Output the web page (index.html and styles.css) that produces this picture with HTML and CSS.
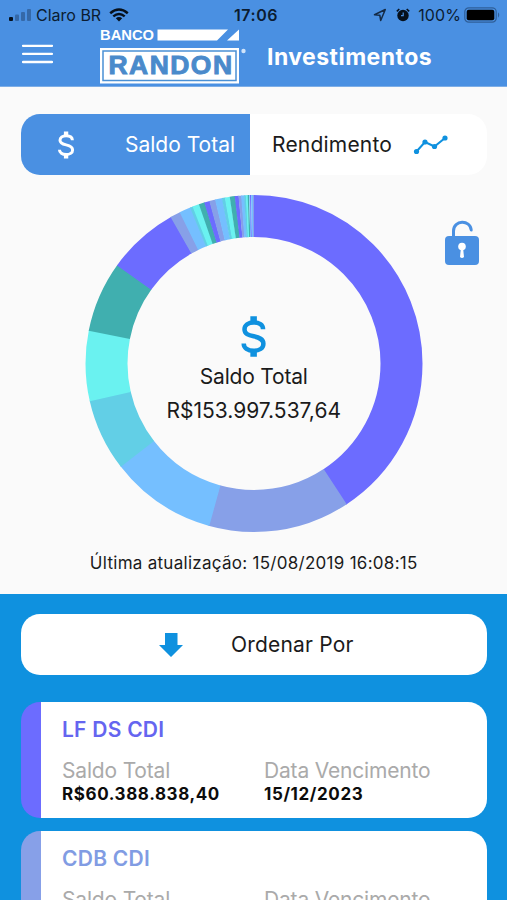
FILE: index.html
```html
<!DOCTYPE html>
<html lang="pt-BR">
<head>
<meta charset="utf-8">
<title>Investimentos</title>
<link rel="stylesheet" href="styles.css">
</head>
<body>
<header class="header">
  <div class="status">
    <div class="status-left">
      <svg width="24" height="14" viewBox="0 0 24 14"><rect x="1" y="9" width="4" height="4" rx="1" fill="#06101c"/><g fill="#3569a8"><rect x="7" y="6.500" width="4" height="6.500" rx="1"/><rect x="13" y="4" width="4" height="9" rx="1"/><rect x="19" y="1" width="4" height="12" rx="1"/></g></svg>
      <span class="carrier">Claro BR</span>
      <svg width="20" height="14" viewBox="0 0 20 14"><g fill="none" stroke="#06101c" stroke-width="2.500"><path d="M1.200 5.200Q10-2.200 18.800 5.200"/><path d="M4.300 8.400Q10 3.600 15.700 8.400"/></g><path d="M6.800 10.300Q10 7.800 13.200 10.300L10 13.500Z" fill="#06101c"/></svg>
    </div>
    <span class="clock">17:06</span>
    <div class="status-right">
      <svg width="14" height="14" viewBox="0 0 14 14"><path d="M1.500 6.700L12.300 1.500 7.700 12.500 6.800 7.200Z" fill="none" stroke="#142a45" stroke-width="1.500" stroke-linejoin="round"/></svg>
      <svg class="alarm" width="14" height="14" viewBox="0 0 14 14"><circle cx="7" cy="7.500" r="5.700" fill="#06101c"/><path d="M.8 3.300L3.300 1M13.200 3.300L10.700 1" stroke="#06101c" stroke-width="1.600"/><path d="M7.200 4.500V7.600H5" fill="none" stroke="#4a90e2" stroke-width="1.200"/></svg>
      <span class="percent">100%</span>
      <svg width="37" height="16" viewBox="0 0 37 16"><rect x=".8" y=".8" width="31.400" height="14.400" rx="4" fill="none" stroke="#2f5f99" stroke-width="1.200"/><rect x="2.700" y="2.700" width="27.600" height="10.600" rx="2" fill="#000"/><path d="M34 5.300Q36.500 8 34 10.700Z" fill="#2f5f99"/></svg>
    </div>
  </div>
  <div class="titlebar">
    <svg class="menu" width="31" height="20" viewBox="0 0 31 20"><path d="M1 1.800H30M1 9.900H30M1 18H30" stroke="#fff" stroke-width="2.300" stroke-linecap="round"/></svg>
    <svg class="logo" width="148" height="56" viewBox="0 0 148 56">
      <text class="logo-top" x="0" y="12.300" textLength="54" lengthAdjust="spacingAndGlyphs">BANCO</text>
      <path d="M57.500 1.500H128L117 12.500H57.500ZM139 1.500V12.500H127Z" fill="#fff"/>
      <rect x="0" y="20" width="139" height="35.500" fill="#fff"/>
      <rect x="3" y="23" width="133" height="29.500" fill="none" stroke="#4a90d5" stroke-width="1.500"/>
      <text class="logo-name" x="8.500" y="46" textLength="125" lengthAdjust="spacingAndGlyphs">RANDON</text>
      <circle cx="143.500" cy="23" r="2.200" fill="#cfe3fa"/>
    </svg>
    <h1 class="title">Investimentos</h1>
  </div>
</header>

<main class="overview">
  <nav class="tabs">
    <div class="tab tab-active">
      <svg width="18" height="28" viewBox="0 0 24 36"><use href="#dollar" color="#fff"/></svg>
      <span>Saldo Total</span>
    </div>
    <div class="tab tab-plain">
      <span class="wide">Rendimento</span>
      <svg width="36" height="22" viewBox="0 0 36 22"><g fill="#0f91df"><path d="M3.500 17.500L12 8 21.500 12.500 32 4" fill="none" stroke="#0f91df" stroke-width="2"/><circle cx="3.500" cy="17.500" r="2.600"/><circle cx="12" cy="8" r="2.600"/><circle cx="21.500" cy="12.500" r="2.600"/><circle cx="32" cy="4" r="2.600"/></g></svg>
    </div>
  </nav>

  <section class="chart">
    <svg class="donut" width="338" height="338" viewBox="-169 -169.500 338 338">
      <defs>
        <g id="dollar"><path d="M20.500 11.500C20.500 7.500 17 5.500 12.200 5.500C7.500 5.500 4 7.800 4 11.600C4 15.700 7.500 16.800 12.200 17.800C17 18.900 20.800 20.200 20.800 24.500C20.800 28.500 17 30.700 12.200 30.700C7 30.700 3.300 28.300 3.300 24.200" fill="none" stroke="currentColor" stroke-width="4"/><path d="M9.200 0H15V6H9.200ZM9.200 30H15V36H9.200Z" fill="currentColor"/></g>
      </defs>
      <g class="ring">
        <circle class="c1" r="147.500" pathLength="360" stroke-dasharray="146.900 400"/>
        <circle class="c2" r="147.500" pathLength="360" stroke-dasharray="49.100 400" stroke-dashoffset="-146.600"/>
        <circle class="c3" r="147.500" pathLength="360" stroke-dasharray="37.100 400" stroke-dashoffset="-195.400"/>
        <circle class="c4" r="147.500" pathLength="360" stroke-dasharray="25.100 400" stroke-dashoffset="-232.200"/>
        <circle class="c5" r="147.500" pathLength="360" stroke-dasharray="24.500 400" stroke-dashoffset="-257"/>
        <circle class="c6" r="147.500" pathLength="360" stroke-dasharray="24.700 400" stroke-dashoffset="-281.200"/>
        <circle class="c1" r="147.500" pathLength="360" stroke-dasharray="25 400" stroke-dashoffset="-305.600"/>
        <circle class="c2" r="147.500" pathLength="360" stroke-dasharray="3.800 400" stroke-dashoffset="-330.300"/>
        <circle class="c3" r="147.500" pathLength="360" stroke-dasharray="4.200 400" stroke-dashoffset="-333.800"/>
        <circle class="c4" r="147.500" pathLength="360" stroke-dasharray="1.200 400" stroke-dashoffset="-337.700"/>
        <circle class="c5" r="147.500" pathLength="360" stroke-dasharray="2.500 400" stroke-dashoffset="-338.600"/>
        <circle class="c6" r="147.500" pathLength="360" stroke-dasharray="2.100 400" stroke-dashoffset="-340.900"/>
        <circle class="c1" r="147.500" pathLength="360" stroke-dasharray="2 400" stroke-dashoffset="-342.800"/>
        <circle class="c2" r="147.500" pathLength="360" stroke-dasharray="2.200 400" stroke-dashoffset="-344.600"/>
        <circle class="c3" r="147.500" pathLength="360" stroke-dasharray="2.600 400" stroke-dashoffset="-346.600"/>
        <circle class="c4" r="147.500" pathLength="360" stroke-dasharray="1.200 400" stroke-dashoffset="-349"/>
        <circle class="c5" r="147.500" pathLength="360" stroke-dasharray="1.800 400" stroke-dashoffset="-350"/>
        <circle class="c6" r="147.500" pathLength="360" stroke-dasharray="1.900 400" stroke-dashoffset="-351.700"/>
        <circle class="c1" r="147.500" pathLength="360" stroke-dasharray="1.400 400" stroke-dashoffset="-353.400"/>
        <circle class="c2" r="147.500" pathLength="360" stroke-dasharray="1.100 400" stroke-dashoffset="-354.700"/>
        <circle class="c3" r="147.500" pathLength="360" stroke-dasharray="1.200 400" stroke-dashoffset="-355.600"/>
        <circle class="c4" r="147.500" pathLength="360" stroke-dasharray=".8 400" stroke-dashoffset="-356.600"/>
        <circle class="c5" r="147.500" pathLength="360" stroke-dasharray=".7 400" stroke-dashoffset="-357.200"/>
        <circle class="c6" r="147.500" pathLength="360" stroke-dasharray=".5 400" stroke-dashoffset="-357.800"/>
        <circle class="c3" r="147.500" pathLength="360" stroke-dasharray=".4 400" stroke-dashoffset="-358.300"/>
        <circle class="c1" r="147.500" pathLength="360" stroke-dasharray=".4 400" stroke-dashoffset="-358.600"/>
        <circle class="c3" r="147.500" pathLength="360" stroke-dasharray=".7 400" stroke-dashoffset="-359"/>
        <circle class="c2" r="147.500" pathLength="360" stroke-dasharray=".4 400" stroke-dashoffset="-359.600"/>
      </g>
    </svg>
    <div class="total">
      <svg width="27" height="41" viewBox="0 0 24 36"><use href="#dollar" color="#0f91df"/></svg>
      <span class="narrow">Saldo Total</span>
      <span>R$153.997.537,64</span>
    </div>
    <svg class="lock" width="36" height="46" viewBox="0 0 36 46"><path d="M9.500 19V11C9.500 -.5 26.500 -.5 27.200 10" fill="none" stroke="#4a90e2" stroke-width="3" stroke-linecap="round"/><rect x="1" y="16" width="34" height="29" rx="4" fill="#4a90e2"/><circle cx="18" cy="26.500" r="3.800" fill="#fff"/><path d="M17 27H19L20 37Q18 39 16 37Z" fill="#fff"/></svg>
  </section>
  <p class="updated">Última atualização: 15/08/2019 16:08:15</p>
</main>

<section class="list">
  <div class="sort">
    <svg width="26" height="26" viewBox="0 0 26 26"><path d="M7 1H19.500V13H25L13 25 1 13H7Z" fill="#0f91df"/></svg>
    <span class="wide">Ordenar Por</span>
  </div>
  <article class="card card-a">
    <h2>LF DS CDI</h2>
    <div class="fields">
      <div class="field"><span class="label">Saldo Total</span><strong>R$60.388.838,40</strong></div>
      <div class="field"><span class="label">Data Vencimento</span><strong>15/12/2023</strong></div>
    </div>
  </article>
  <article class="card card-b">
    <h2>CDB CDI</h2>
    <div class="fields">
      <div class="field"><span class="label">Saldo Total</span></div>
      <div class="field"><span class="label">Data Vencimento</span></div>
    </div>
  </article>
</section>
</body>
</html>
```

FILE: styles.css
```css
* { box-sizing: border-box; }
body {
  margin: 0;
  height: 900px;
  overflow: hidden;
  display: flex;
  flex-direction: column;
  background: #fafafa;
  color: #1b1b1b;
  font-family: Inter, "Liberation Sans", sans-serif;
  font-size: 21px;
  white-space: nowrap;
}
svg { display: block; flex: none; }
h1, h2, p { margin: 0; }
.wide { letter-spacing: .2px; }
.narrow { letter-spacing: -.2px; }

.header {
  height: 87px;
  flex: none;
  background: #4a90e2;
  border-bottom: 1px solid #7eaee6;
}
.status {
  height: 28px;
  padding: 2px 8px 0;
  display: grid;
  grid-template-columns: 1fr auto 1fr;
  align-items: center;
  font-size: 16px;
  color: #0b1c31;
}
.status-left, .status-right { display: flex; align-items: center; }
.status-left { gap: 4px; }
.carrier { margin-right: 4px; }
.clock { font-weight: 600; letter-spacing: .5px; margin-left: 5px; }
.status-right { justify-content: flex-end; margin-right: -2px; }
.alarm { margin: 0 8px 0 9px; }
.percent { margin-right: 3px; letter-spacing: .1px; }
.titlebar { display: flex; height: 56px; align-items: center; padding-left: 22px; }
.menu { margin-top: -4px; }
.logo { margin-left: 47px; overflow: visible; }
.logo-top { font: 700 14.5px "Liberation Sans", sans-serif; fill: #fff; }
.logo-name { font: 700 25px "Liberation Sans", sans-serif; letter-spacing: 1.4px; fill: #4a8acb; stroke: #4a8acb; stroke-width: .9px; }
.title { margin: 1px 0 0 19px; font-size: 23px; font-weight: 700; letter-spacing: .45px; color: #fff; }

.overview { flex: none; height: 507px; padding: 27px 20.500px 0 21px; }
.tabs { display: flex; height: 61px; border-radius: 19px; overflow: hidden; background: #fff; }
.tab { display: flex; align-items: center; }
.tab-active { width: 229px; padding-left: 36px; gap: 50px; background: #4a90e2; color: #fff; }
.tab-plain { flex: 1; padding-left: 22px; gap: 21px; }

.chart { position: relative; height: 338px; margin-top: 19px; display: flex; justify-content: center; }
.donut { overflow: visible; }
.ring { transform: rotate(-90deg); fill: none; stroke-width: 42px; }
.c1 { stroke: #6c6cff; }
.c2 { stroke: #87a0e8; }
.c3 { stroke: #75bfff; }
.c4 { stroke: #62cfe6; }
.c5 { stroke: #6af2f0; }
.c6 { stroke: #40afaf; }
.total { position: absolute; inset: 122px 0 auto; display: flex; flex-direction: column; align-items: center; }
.total span { line-height: 34px; }
.total svg { margin-bottom: 3px; }
.lock { position: absolute; right: 7px; top: 26px; }
.updated { margin-top: 19px; font-size: 17px; letter-spacing: .28px; line-height: 24px; text-align: center; }

.list { flex: 1; min-height: 0; overflow: hidden; padding: 20px 20.500px 0 21px; background: #0f91df; }
.sort { height: 61px; border-radius: 19px; background: #fff; display: flex; align-items: center; padding-left: 137px; gap: 47px; }
.card {
  height: 116px;
  padding: 14px 0 0 21px;
  overflow: hidden;
  border-left: 20px solid;
  border-radius: 19px;
  background: linear-gradient(#fff, #fff) padding-box;
}
.card-a { margin-top: 27px; border-color: #6c6cff; }
.card-b { margin-top: 13px; border-color: #87a0e8; }
.card h2 { font-size: 21px; line-height: 28px; font-weight: 600; letter-spacing: .25px; }
.card-a h2 { color: #6565f0; }
.card-b h2 { color: #819ce3; }
.fields { display: grid; grid-template-columns: 202px 1fr; margin-top: 14px; }
.field { display: flex; flex-direction: column; align-items: flex-start; }
.label { color: #aaa; line-height: 26px; letter-spacing: -.18px; }
.field strong { font-size: 17px; line-height: 21px; font-weight: 700; letter-spacing: .6px; color: #0c0c0c; }
```
